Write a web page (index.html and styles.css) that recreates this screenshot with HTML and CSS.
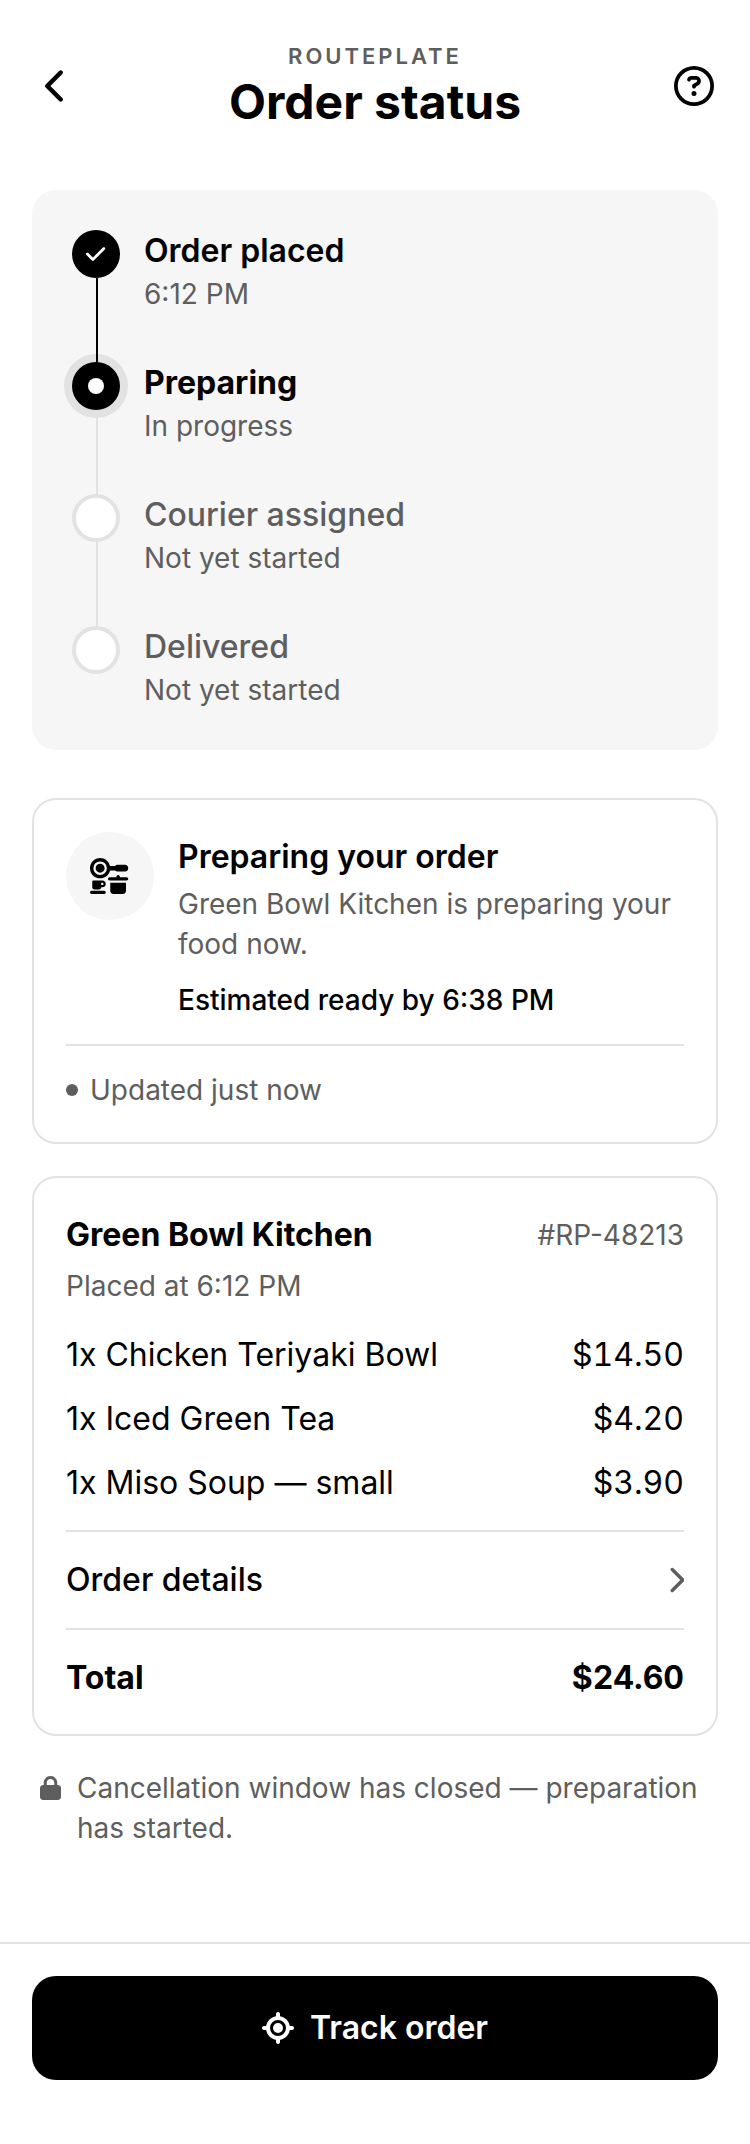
FILE: index.html
```html
<!DOCTYPE html>
<html lang="en">
<head>
    <meta charset="UTF-8">
    <meta name="viewport" content="width=device-width, initial-scale=1.0">
    <title>Routeplate - Order status</title>
    <link rel="stylesheet" href="styles.css">
</head>
<body>
    <header class="top-bar">
        <button type="button" class="icon-button" aria-label="Back">
            <svg class="icon-back" viewBox="0 0 320 512" aria-hidden="true"><path d="M9.4 233.4c-12.5 12.5-12.5 32.8 0 45.3l192 192c12.5 12.5 32.8 12.5 45.3 0s12.5-32.8 0-45.3L77.3 256 246.6 86.6c12.5-12.5 12.5-32.8 0-45.3s-32.8-12.5-45.3 0l-192 192z"/></svg>
        </button>
        <div class="heading">
            <p class="brand">ROUTEPLATE</p>
            <h1>Order status</h1>
        </div>
        <button type="button" class="icon-button" aria-label="Help">
            <svg class="icon-help" viewBox="0 0 512 512" aria-hidden="true"><path d="M464 256A208 208 0 1 0 48 256a208 208 0 1 0 416 0zM0 256a256 256 0 1 1 512 0A256 256 0 1 1 0 256zm169.8-90.7c7.9-22.3 29.1-37.3 52.8-37.3h58.3c34.9 0 63.1 28.3 63.1 63.1c0 22.6-12.1 43.5-31.7 54.8L280 264.4c-.2 13-10.9 23.6-24 23.6c-13.3 0-24-10.7-24-24V250.5c0-8.6 4.6-16.5 12.1-20.8l44.3-25.4c4.7-2.7 7.6-7.7 7.6-13.1c0-8.4-6.8-15.1-15.1-15.1H222.6c-3.4 0-6.4 2.1-7.5 5.3l-.4 1.2c-4.4 12.5-18.2 19-30.6 14.6s-19-18.2-14.6-30.6l.4-1.2zM224 352a32 32 0 1 1 64 0 32 32 0 1 1 -64 0z"/></svg>
        </button>
    </header>
    <main>
        <ol class="timeline">
            <li class="step done">
                <div class="track">
                    <span class="marker">
                        <svg class="icon-check" viewBox="0 0 448 512" aria-hidden="true"><path d="M438.6 105.4c12.5 12.5 12.5 32.8 0 45.3l-256 256c-12.5 12.5-32.8 12.5-45.3 0l-128-128c-12.5-12.5-12.5-32.8 0-45.3s32.8-12.5 45.3 0L160 338.7 393.4 105.4c12.5-12.5 32.8-12.5 45.3 0z"/></svg>
                    </span>
                </div>
                <div class="step-text">
                    <h2>Order placed</h2>
                    <p>6:12 PM</p>
                </div>
            </li>
            <li class="step current" aria-current="step">
                <div class="track"><span class="marker"></span></div>
                <div class="step-text">
                    <h2>Preparing</h2>
                    <p>In progress</p>
                </div>
            </li>
            <li class="step">
                <div class="track"><span class="marker"></span></div>
                <div class="step-text">
                    <h2>Courier assigned</h2>
                    <p>Not yet started</p>
                </div>
            </li>
            <li class="step">
                <div class="track"><span class="marker"></span></div>
                <div class="step-text">
                    <h2>Delivered</h2>
                    <p>Not yet started</p>
                </div>
            </li>
        </ol>

        <section class="card">
            <div class="status">
                <div class="status-icon">
                    <svg class="icon-kitchen" viewBox="0 0 576 512" aria-hidden="true"><path d="M240 144A96 96 0 1 0 48 144a96 96 0 1 0 192 0zm44.4 32C269.9 240.1 212.5 288 144 288C64.5 288 0 223.5 0 144S64.5 0 144 0c68.5 0 125.9 47.9 140.4 112h71.8c8.8-9.8 21.6-16 35.8-16H496c26.5 0 48 21.5 48 48s-21.5 48-48 48H392c-14.2 0-27-6.2-35.8-16H284.4zM144 80a64 64 0 1 1 0 128 64 64 0 1 1 0-128zM400 240c13.3 0 24 10.7 24 24v8h96c13.3 0 24 10.7 24 24s-10.7 24-24 24H280c-13.3 0-24-10.7-24-24s10.7-24 24-24h96v-8c0-13.3 10.7-24 24-24zM288 464V352H512V464c0 26.5-21.5 48-48 48H336c-26.5 0-48-21.5-48-48zM48 320h80 16 32c26.5 0 48 21.5 48 48s-21.5 48-48 48H160c0 17.7-14.3 32-32 32H64c-17.7 0-32-14.3-32-32V336c0-8.8 7.2-16 16-16zm128 64c8.8 0 16-7.2 16-16s-7.2-16-16-16H160v32h16zM24 464H200c13.3 0 24 10.7 24 24s-10.7 24-24 24H24c-13.3 0-24-10.7-24-24s10.7-24 24-24z"/></svg>
                </div>
                <div class="status-text">
                    <h2>Preparing your order</h2>
                    <p class="muted">Green Bowl Kitchen is preparing your food now.</p>
                    <p class="estimate">Estimated ready by 6:38 PM</p>
                </div>
            </div>
            <p class="updated">Updated just now</p>
        </section>

        <section class="card">
            <div class="row">
                <h2 class="restaurant">Green Bowl Kitchen</h2>
                <span class="muted">#RP-48213</span>
            </div>
            <p class="placed muted">Placed at 6:12 PM</p>
            <ul class="items">
                <li class="row"><span>1x Chicken Teriyaki Bowl</span><span class="price">$14.50</span></li>
                <li class="row"><span>1x Iced Green Tea</span><span class="price">$4.20</span></li>
                <li class="row"><span>1x Miso Soup — small</span><span class="price">$3.90</span></li>
            </ul>
            <button type="button" class="row details">
                <span>Order details</span>
                <svg class="icon-next" viewBox="0 0 320 512" aria-hidden="true"><path d="M310.6 233.4c12.5 12.5 12.5 32.8 0 45.3l-192 192c-12.5 12.5-32.8 12.5-45.3 0s-12.5-32.8 0-45.3L242.7 256 73.4 86.6c-12.5-12.5-12.5-32.8 0-45.3s32.8-12.5 45.3 0l192 192z"/></svg>
            </button>
            <div class="row total">
                <span>Total</span>
                <span class="price">$24.60</span>
            </div>
        </section>

        <div class="notice">
            <svg class="icon-lock" viewBox="0 0 448 512" aria-hidden="true"><path d="M144 144v48H304V144c0-44.2-35.8-80-80-80s-80 35.8-80 80zM80 192V144C80 64.5 144.5 0 224 0s144 64.5 144 144v48h16c35.3 0 64 28.7 64 64V448c0 35.3-28.7 64-64 64H64c-35.3 0-64-28.7-64-64V256c0-35.3 28.7-64 64-64H80z"/></svg>
            <p>Cancellation window has closed — preparation has started.</p>
        </div>
    </main>
    <footer>
        <button type="button" class="track-button">
            <svg class="icon-track" viewBox="0 0 512 512" aria-hidden="true"><path d="M256 0c17.7 0 32 14.3 32 32V66.7C368.4 80.1 431.9 143.6 445.3 224H480c17.7 0 32 14.3 32 32s-14.3 32-32 32H445.3C431.9 368.4 368.4 431.9 288 445.3V480c0 17.7-14.3 32-32 32s-32-14.3-32-32V445.3C143.6 431.9 80.1 368.4 66.7 288H32c-17.7 0-32-14.3-32-32s14.3-32 32-32H66.7C80.1 143.6 143.6 80.1 224 66.7V32c0-17.7 14.3-32 32-32zM128 256a128 128 0 1 0 256 0 128 128 0 1 0 -256 0zm128-80a80 80 0 1 1 0 160 80 80 0 1 1 0-160z"/></svg>
            Track order
        </button>
    </footer>
</body>
</html>
```
FILE: styles.css
```css
* {
    box-sizing: border-box;
    margin: 0;
    padding: 0;
}
body {
    display: flex;
    flex-direction: column;
    min-height: 100vh;
    font-family: Inter, "Liberation Sans", sans-serif;
    font-size: 28px;
    line-height: 40px;
    color: #000;
    background-color: #fff;
}
ol, ul {
    list-style: none;
}
button {
    font: inherit;
    color: inherit;
    background: none;
    border: none;
    cursor: pointer;
}
svg {
    display: block;
    flex: none;
    fill: currentColor;
}
h2 {
    font-size: 32px;
    font-weight: 600;
    line-height: 50px;
}
.muted {
    color: #5e5e5e;
}

/* header */
.top-bar {
    display: flex;
    align-items: center;
    justify-content: space-between;
    padding: 40px 12px 26px;
}
.icon-button {
    display: flex;
    align-items: center;
    justify-content: center;
    width: 88px;
    height: 88px;
}
.heading {
    text-align: center;
}
.brand {
    font-size: 22px;
    font-weight: 600;
    line-height: 32px;
    letter-spacing: 3px;
    color: #5e5e5e;
}
h1 {
    font-size: 48px;
    font-weight: 700;
    line-height: 60px;
}
.icon-back {
    height: 36px;
}
.icon-help {
    height: 40px;
}

main {
    flex: 1;
    padding: 32px;
}

/* progress steps */
.timeline {
    padding: 40px;
    margin-bottom: 48px;
    background-color: #f6f6f6;
    border-radius: 24px;
}
.step {
    display: flex;
    gap: 24px;
}
.track {
    display: flex;
    flex-direction: column;
    width: 48px;
}
.track::after {
    content: "";
    flex: 1;
    width: 2px;
    margin-left: 24px;
    background-color: #e2e2e2;
}
.done .track::after {
    z-index: 1;
    margin-bottom: -1px;
    background-color: #000;
}
.step:last-child .track::after {
    display: none;
}
.marker {
    display: flex;
    align-items: center;
    justify-content: center;
    width: 48px;
    height: 48px;
    background-color: #fff;
    border: 4px solid #e2e2e2;
    border-radius: 50%;
}
.done .marker,
.current .marker {
    color: #fff;
    background-color: #000;
    border: none;
}
.current .marker {
    box-shadow: 0 0 0 8px #e2e2e2;
}
.current .marker::before {
    content: "";
    width: 16px;
    height: 16px;
    background-color: #fff;
    border-radius: 50%;
}
.icon-check {
    height: 22px;
}
.step-text {
    padding-bottom: 48px;
    color: #5e5e5e;
}
.step:last-child .step-text {
    padding-bottom: 0;
}
.step-text h2 {
    margin-bottom: 2px;
    font-weight: 500;
    line-height: 42px;
}
.done h2,
.current h2 {
    color: #000;
}
.done h2 {
    font-weight: 600;
}
.current h2 {
    font-weight: 700;
}

/* cards */
.card {
    padding: 32px;
    margin-bottom: 32px;
    border: 2px solid #e2e2e2;
    border-radius: 24px;
}
.status {
    display: flex;
    gap: 24px;
    padding-bottom: 24px;
}
.status-icon {
    display: flex;
    flex: none;
    align-items: center;
    justify-content: center;
    width: 88px;
    height: 88px;
    background-color: #f6f6f6;
    border-radius: 50%;
}
.icon-kitchen {
    height: 36px;
}
.status-text h2 {
    margin-bottom: 2px;
}
.estimate {
    margin-top: 16px;
    font-weight: 500;
}
.updated {
    display: flex;
    align-items: center;
    gap: 12px;
    padding-top: 24px;
    color: #5e5e5e;
    border-top: 2px solid #e2e2e2;
}
.updated::before {
    content: "";
    width: 12px;
    height: 12px;
    background-color: #5e5e5e;
    border-radius: 50%;
}
.row {
    display: flex;
    align-items: center;
    justify-content: space-between;
    gap: 16px;
}
.restaurant {
    font-weight: 700;
}
.placed {
    margin-top: 6px;
}
.items {
    display: flex;
    flex-direction: column;
    gap: 14px;
    padding: 24px 0 22px;
    font-size: 32px;
    line-height: 50px;
}
.price {
    font-variant-numeric: tabular-nums;
}
.details {
    width: 100%;
    padding: 24px 0;
    font-size: 32px;
    font-weight: 500;
    line-height: 48px;
    border-top: 2px solid #e2e2e2;
    border-bottom: 2px solid #e2e2e2;
}
.icon-next {
    height: 28px;
    color: #5e5e5e;
}
.total {
    padding-top: 24px;
    font-size: 32px;
    font-weight: 700;
    line-height: 48px;
}
.notice {
    display: flex;
    gap: 16px;
    padding: 0 8px;
    color: #5e5e5e;
}
.icon-lock {
    height: 24px;
    margin-top: 8px;
}

/* bottom action */
footer {
    padding: 32px 32px 64px;
    border-top: 2px solid #e2e2e2;
}
.track-button {
    display: flex;
    align-items: center;
    justify-content: center;
    gap: 16px;
    width: 100%;
    height: 104px;
    font-size: 32px;
    font-weight: 600;
    color: #fff;
    background-color: #000;
    border-radius: 24px;
}
.icon-track {
    height: 32px;
}
```
